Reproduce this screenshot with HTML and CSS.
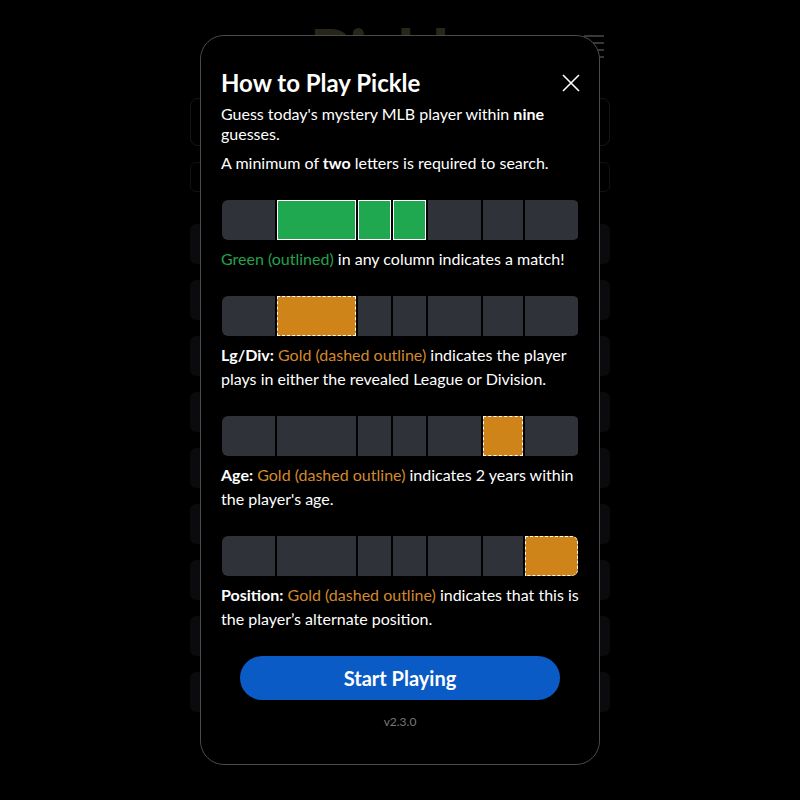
FILE: index.html
```html
<!DOCTYPE html>
<html lang="en">
<head>
  <meta charset="UTF-8">
  <meta name="viewport" content="width=device-width, initial-scale=1.0">
  <title>Pickle</title>
  <link rel="stylesheet" href="styles.css">
</head>
<body>
  <!-- game page behind the dialog -->
  <div class="page">
    <header class="top-bar">
      <div class="logo">Pickle</div>
      <div class="menu-btn">
        <span></span><span></span><span></span><span></span>
      </div>
    </header>
    <div class="search-box"></div>
    <div class="hint-box"></div>
    <div class="guess-list">
      <div class="guess-row"></div>
      <div class="guess-row"></div>
      <div class="guess-row"></div>
      <div class="guess-row"></div>
      <div class="guess-row"></div>
      <div class="guess-row"></div>
      <div class="guess-row"></div>
      <div class="guess-row"></div>
      <div class="guess-row"></div>
    </div>
  </div>

  <div class="overlay">
    <div class="modal">
      <div class="modal-head">
        <h2>How to Play Pickle</h2>
        <button class="close-btn" type="button" aria-label="Close">
          <svg width="20" height="20" viewBox="0 0 20 20">
            <path d="M2 2 L18 18 M18 2 L2 18" stroke="#fff" stroke-width="1.6" fill="none"/>
          </svg>
        </button>
      </div>
      <p class="intro">Guess today's mystery MLB player within <b>nine</b> guesses.</p>
      <p class="intro">A minimum of <b>two</b> letters is required to search.</p>

      <div class="demo-bar">
        <div class="cell w-team"></div>
        <div class="cell w-name match"></div>
        <div class="cell w-sm match"></div>
        <div class="cell w-sm match"></div>
        <div class="cell w-team"></div>
        <div class="cell w-age"></div>
        <div class="cell w-team"></div>
      </div>
      <p class="rule"><span class="green">Green (outlined)</span> in any column indicates a match!</p>

      <div class="demo-bar">
        <div class="cell w-team"></div>
        <div class="cell w-name close"></div>
        <div class="cell w-sm"></div>
        <div class="cell w-sm"></div>
        <div class="cell w-team"></div>
        <div class="cell w-age"></div>
        <div class="cell w-team"></div>
      </div>
      <p class="rule"><b>Lg/Div:</b> <span class="gold">Gold (dashed outline)</span> indicates the player plays in either the revealed League or Division.</p>

      <div class="demo-bar">
        <div class="cell w-team"></div>
        <div class="cell w-name"></div>
        <div class="cell w-sm"></div>
        <div class="cell w-sm"></div>
        <div class="cell w-team"></div>
        <div class="cell w-age close"></div>
        <div class="cell w-team"></div>
      </div>
      <p class="rule"><b>Age:</b> <span class="gold">Gold (dashed outline)</span> indicates 2 years within the player's age.</p>

      <div class="demo-bar">
        <div class="cell w-team"></div>
        <div class="cell w-name"></div>
        <div class="cell w-sm"></div>
        <div class="cell w-sm"></div>
        <div class="cell w-team"></div>
        <div class="cell w-age"></div>
        <div class="cell w-team close"></div>
      </div>
      <p class="rule"><b>Position:</b> <span class="gold">Gold (dashed outline)</span> indicates that this is the player’s alternate position.</p>

      <button class="start-btn" type="button">Start Playing</button>
      <div class="version">v2.3.0</div>
    </div>
  </div>
</body>
</html>
```

FILE: styles.css
```css
body {
  margin: 0;
  background: #000;
  color: #fff;
  font-family: 'Lato', 'Noto Sans', sans-serif;
}

/* background page */
.page {
  width: 420px;
  margin: 0 auto;
  padding-top: 20px;
}

.top-bar {
  height: 62px;
  display: flex;
  justify-content: space-between;
  align-items: flex-start;
}

.logo {
  margin-left: 120px;
  font-size: 64px;
  font-weight: 900;
  line-height: 1;
  color: #3c3b27;
}

.menu-btn {
  margin-top: 15px;
  margin-right: 6px;
  width: 20px;
  display: flex;
  flex-direction: column;
  gap: 5px;
}

.menu-btn span {
  height: 2px;
  background: #555;
}

.search-box {
  margin-top: 16px;
  height: 46px;
  border: 1px solid #222;
  border-radius: 8px;
}

.hint-box {
  margin-top: 16px;
  height: 28px;
  border: 1px solid #1c1c1c;
  border-radius: 6px;
}

.guess-list {
  margin-top: 32px;
  display: flex;
  flex-direction: column;
  gap: 16px;
}

.guess-row {
  height: 40px;
  background: #121214;
  border-radius: 6px;
}

/* dialog */
.overlay {
  position: fixed;
  inset: 0;
  display: flex;
  align-items: center;
  justify-content: center;
  background: rgba(0, 0, 0, 0.35);
}

.modal {
  width: 400px;
  height: 730px;
  box-sizing: border-box;
  padding: 32px 20px 20px;
  background: #000;
  border: 1px solid #4a4a4a;
  border-radius: 24px;
}

.modal-head {
  display: flex;
  justify-content: space-between;
  align-items: center;
}

.modal-head h2 {
  margin: 0;
  font-size: 24px;
  line-height: 30px;
  font-weight: 700;
}

.close-btn {
  background: none;
  border: none;
  padding: 0;
  margin-right: -2px;
  width: 20px;
  height: 20px;
  cursor: pointer;
}

.intro {
  margin: 6px 0 0;
  font-size: 16px;
  line-height: 20px;
}

.intro + .intro {
  margin-top: 9px;
}

.demo-bar {
  margin: 27px 0 0 1px;
  height: 40px;
  display: flex;
  gap: 2px;
  border-radius: 6px;
  overflow: hidden;
}

.rule + .demo-bar {
  margin-top: 25px;
}

.cell {
  background: #2f3238;
  box-sizing: border-box;
}

.w-team { width: 53px; }
.w-name { width: 79px; }
.w-sm { width: 33px; }
.w-age { width: 40px; }

.cell.match {
  background: #1fa84f;
  border: 1px solid #fff;
}

.cell.close {
  background: #cf8419;
  border: 1px dashed #fff;
}

.demo-bar .cell:last-child.close {
  border-radius: 0 6px 6px 0;
}

.rule {
  margin: 7px 0 0;
  font-size: 16px;
  line-height: 24px;
}

.green { color: #23a24d; }
.gold { color: #d48a2a; }

.start-btn {
  display: block;
  margin: 25px auto 0;
  width: 320px;
  height: 44px;
  border: none;
  border-radius: 22px;
  background: #0a5bc5;
  color: #fff;
  font-family: inherit;
  font-size: 20px;
  font-weight: 700;
  cursor: pointer;
}

.version {
  margin-top: 14px;
  text-align: center;
  font-size: 12px;
  color: #777;
}
```
